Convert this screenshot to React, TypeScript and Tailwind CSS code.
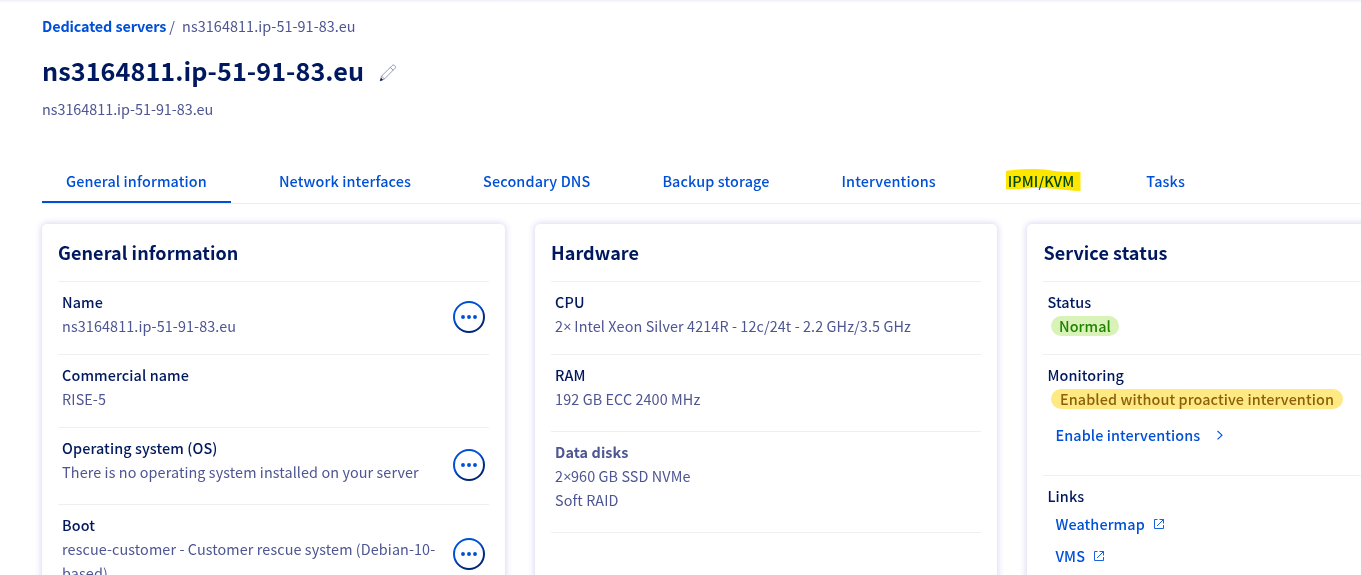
import type { ReactNode } from "react";

const tabs = [
  "General information",
  "Network interfaces",
  "Secondary DNS",
  "Backup storage",
  "Interventions",
  "IPMI/KVM",
  "Tasks",
];

function Times() {
  return <span className="font-['Open_Sans',sans-serif] leading-none tracking-[-0.4px]">×</span>;
}

function MenuButton() {
  return (
    <button className="mr-1 mb-[2px] size-8 shrink-0" aria-label="Actions">
      <svg viewBox="0 0 32 32" className="size-8" fill="none">
        <defs>
          <linearGradient id="ring" x1="0.25" y1="0.1" x2="0.75" y2="0.9">
            <stop offset="0" stopColor="#0050d7" />
            <stop offset="0.35" stopColor="#0050d7" />
            <stop offset="0.75" stopColor="#002b84" />
            <stop offset="1" stopColor="#00267a" />
          </linearGradient>
        </defs>
        <circle cx="16" cy="16" r="15" stroke="url(#ring)" strokeWidth="2" />
        <circle cx="10" cy="16" r="1.950" fill="#0050d7" />
        <circle cx="16" cy="16" r="1.950" fill="#0050d7" />
        <circle cx="22" cy="16" r="1.950" fill="#0050d7" />
      </svg>
    </button>
  );
}

function ExternalIcon() {
  return (
    <svg viewBox="0 0 12 12" className="size-3" fill="none" stroke="#0050d7" strokeWidth="0.9">
      <path d="M4.500 1.500H1.500v9h9V7M6.500 1.500h4v4M10.500 1.500L4 8" />
    </svg>
  );
}

function Card({ title, children }: { title: string; children: ReactNode }) {
  return (
    <section className="h-[500px] rounded-[5px] bg-white px-4 pt-3 shadow-[0_0_6px_1px_rgba(75,60,190,0.2)]">
      <h2 className="mb-[13px] h-8 text-[18px] leading-8 font-bold tracking-[0.07px] text-[#00185e]">{title}</h2>
      {children}
    </section>
  );
}

function Row({
  label,
  children,
  height,
  action,
  muted,
}: {
  label: string;
  children: ReactNode;
  height: string;
  action?: boolean;
  muted?: boolean;
}) {
  return (
    <div className={`flex items-center justify-between border-t border-[#efeff3] ${height}`}>
      <dl className="min-w-0 flex-1 self-start pt-2 pl-[4.1px]">
        <dt className={muted ? "font-bold" : "font-medium text-[#00185e]"}>{label}</dt>
        <dd>{children}</dd>
      </dl>
      {action && <MenuButton />}
    </div>
  );
}

export default function App() {
  return (
    <main className="h-[575px] w-full overflow-hidden bg-white font-['Noto_Sans_CJK_SC',sans-serif] text-[14.4px] leading-6 tracking-[0.09px] text-[#4d5592]">
      <div className="h-[3px] bg-linear-to-b from-[#f0effa] to-white" />
      <header className="px-[42px] pt-[11px]">
        <nav className="flex h-6">
          <a className="font-bold tracking-[-0.12px] text-[#0050d7]">Dedicated servers</a>
          <span className="ml-[3px]">/</span>
          <span className="ml-[7px] tracking-[0.07px]">ns3164811.ip-51-91-83.eu</span>
        </nav>
        <div className="mt-3 flex h-10 items-center">
          <h1 className="text-[25.2px] leading-10 font-bold tracking-[0.07px] text-[#00185e]">ns3164811.ip-51-91-83.eu</h1>
          <svg viewBox="0 0 18 18" className="mt-[6px] ml-[15px] size-[18px]" fill="none" stroke="#7a80aa" strokeWidth="0.8">
            <path d="M1.200 16.800l1.300-4.600L13 1.700c1-1 2-.8 2.800 0s1 1.800 0 2.800L5.500 14.900zM2.500 12.200l3 2.700M11.300 3.400l2.900 2.900" />
            <path d="M1 17l1-3.200L4.200 16z" fill="#00185e" stroke="none" />
          </svg>
        </div>
        <p className="mt-[7px] h-6 tracking-[-0.03px]">ns3164811.ip-51-91-83.eu</p>
      </header>

      <nav className="mt-[43px] ml-[42px] flex h-10 gap-6 border-b border-[#e0f1fb] font-medium tracking-[0.12px] text-[#0050d7]">
        {tabs.map((tab, i) => (
          <a
            key={tab}
            className={`relative h-[39px] shrink-0 px-6 pt-[5px] ${i === 0 ? "border-b-2 border-[#0050d7]" : ""}`}
          >
            {tab}
            {tab === "IPMI/KVM" && (
              <svg viewBox="0 0 76 24" className="absolute top-[3px] left-[21px] h-6 w-[76px] mix-blend-multiply">
                <path d="M1 4C12 2 30 1 43 3C54 5 64 5 75.500 5V24C58 23.500 49 21 34 21C22 21 12 22.500 1 22.500Z" fill="#ffe600" />
              </svg>
            )}
          </a>
        ))}
      </nav>

      <div className="mt-5 ml-[42px] grid w-[1448px] grid-cols-[463px_462.4px_463px] gap-[30px]">
        <Card title="General information">
          <Row label="Name" height="h-[73px]" action>ns3164811.ip-51-91-83.eu</Row>
          <Row label="Commercial name" height="h-[73px]">RISE-5</Row>
          <Row label="Operating system (OS)" height="h-[77px]" action>
            There is no operating system installed on your server
          </Row>
          <Row label="Boot" height="h-[101px]" action>
            rescue-customer - Customer rescue system (Debian-10-based)
          </Row>
        </Card>
        <Card title="Hardware">
          <Row label="CPU" height="h-[73px]">
            2<Times /> Intel Xeon Silver 4214R - 12c/24t - 2.2 GHz/3.5 GHz
          </Row>
          <Row label="RAM" height="h-[77px]">192 GB ECC 2400 MHz</Row>
          <Row label="Data disks" height="h-[101px]" muted>
            2<Times />960 GB SSD NVMe
            <br />
            Soft RAID
          </Row>
          <div className="border-t border-[#efeff3]" />
        </Card>
        <Card title="Service status">
          <Row label="Status" height="h-[73px]">
            <span className="mt-[2px] ml-[3.500px] flex h-5 w-[68px] justify-center rounded-full bg-[#d9f2b8] leading-5 font-medium text-[#1f8300]">
              Normal
            </span>
          </Row>
          <Row label="Monitoring" height="h-[121px]">
            <span className="mt-[2px] ml-[3.500px] flex h-5 w-[292px] justify-center rounded-full bg-[#ffe982] leading-5 font-medium text-[#8d5f0c]">
              Enabled without proactive intervention
            </span>
            <a className="mt-[14px] ml-2 flex items-center font-medium text-[#0050d7]">
              Enable interventions
              <svg viewBox="0 0 8 12" className="ml-4 h-3 w-2" fill="none" stroke="#0050d7" strokeWidth="1.1">
                <path d="M1.500 2L6 6.200L1.500 10.400" />
              </svg>
            </a>
          </Row>
          <Row label="Links" height="h-[120px]">
            <a className="mt-1 ml-2 flex items-center gap-2 font-medium text-[#0050d7]">
              Weathermap <ExternalIcon />
            </a>
            <a className="mt-2 ml-2 flex items-center gap-2 font-medium text-[#0050d7]">
              VMS <ExternalIcon />
            </a>
          </Row>
        </Card>
      </div>
    </main>
  );
}
